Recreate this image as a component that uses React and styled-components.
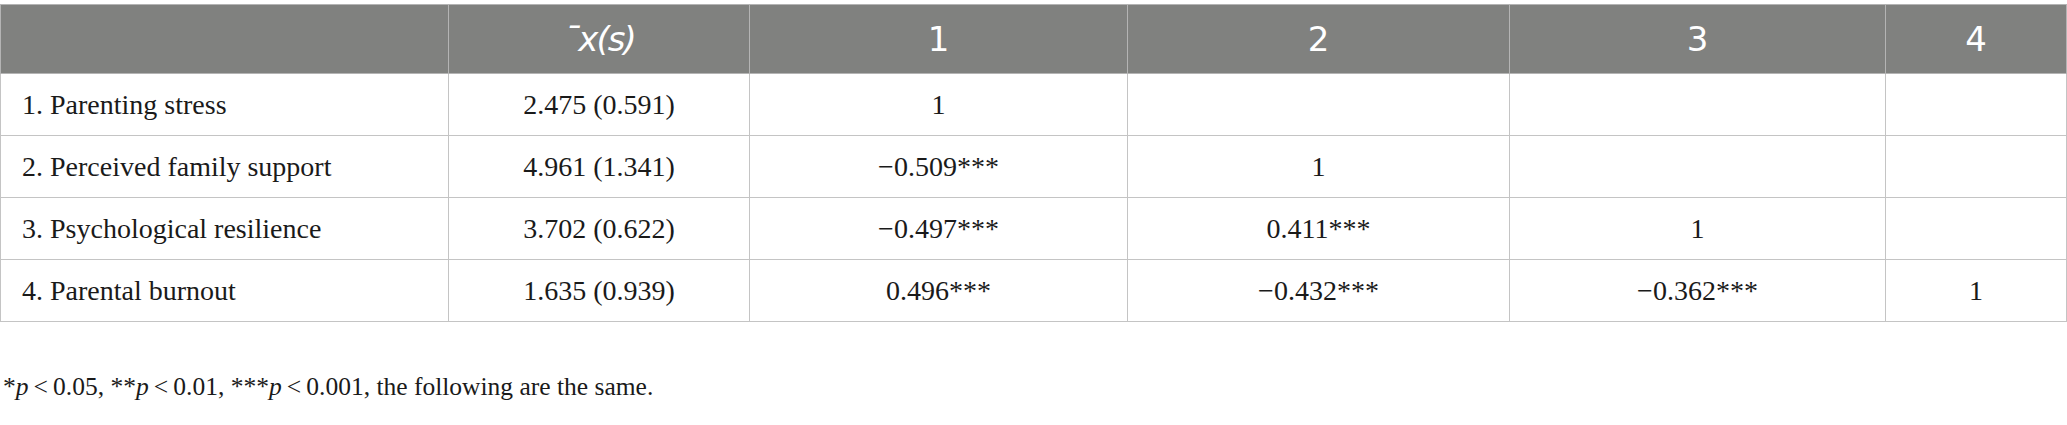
import React from "react";
import styled, { createGlobalStyle } from "styled-components";

const GlobalStyle = createGlobalStyle`
  html, body {
    margin: 0;
    padding: 0;
    background: #ffffff;
  }
`;

const Page = styled.div`
  width: 2067px;
  padding-top: 4px;
  font-family: "Liberation Serif", "Times New Roman", serif;
  color: #1a1a1a;
`;

const Table = styled.table`
  width: 2066px;
  border-collapse: collapse;
  table-layout: fixed;
`;

const HeadCell = styled.th`
  height: 68px;
  padding: 0;
  background: #80817f;
  color: #ffffff;
  font-family: "DejaVu Sans", "Open Sans", sans-serif;
  font-size: 34px;
  font-weight: 400;
  text-align: center;
  border: 1px solid #b4b4b4;
`;

const Mean = styled.span`
  font-style: italic;
  letter-spacing: -2px;
`;

const Cell = styled.td`
  height: 61px;
  padding: 0 ${(p) => (p.$label ? "21px" : "0")};
  font-size: 28px;
  text-align: ${(p) => (p.$label ? "left" : "center")};
  border: 1px solid #c4c4c4;
`;

const Note = styled.p`
  margin: 50px 0 0 3px;
  font-size: 25.5px;
  color: #1a1a1a;
`;

const widths = [448, 301, 378, 382, 376, 181];

const rows = [
  ["1. Parenting stress", "2.475 (0.591)", "1", "", "", ""],
  ["2. Perceived family support", "4.961 (1.341)", "\u22120.509***", "1", "", ""],
  ["3. Psychological resilience", "3.702 (0.622)", "\u22120.497***", "0.411***", "1", ""],
  ["4. Parental burnout", "1.635 (0.939)", "0.496***", "\u22120.432***", "\u22120.362***", "1"],
];

export default function App() {
  return (
    <Page>
      <GlobalStyle />
      <Table>
        <colgroup>
          {widths.map((w, i) => (
            <col key={i} style={{ width: w }} />
          ))}
        </colgroup>
        <thead>
          <tr>
            <HeadCell />
            <HeadCell>
              <Mean>¯x(s)</Mean>
            </HeadCell>
            <HeadCell>1</HeadCell>
            <HeadCell>2</HeadCell>
            <HeadCell>3</HeadCell>
            <HeadCell>4</HeadCell>
          </tr>
        </thead>
        <tbody>
          {rows.map((row, r) => (
            <tr key={r}>
              {row.map((value, c) => (
                <Cell key={c} $label={c === 0}>
                  {value}
                </Cell>
              ))}
            </tr>
          ))}
        </tbody>
      </Table>
      <Note>
        *<i>p</i>{"\u2009<\u2009"}0.05, **<i>p</i>{"\u2009<\u2009"}0.01, ***
        <i>p</i>{"\u2009<\u2009"}0.001, the following are the same.
      </Note>
    </Page>
  );
}
